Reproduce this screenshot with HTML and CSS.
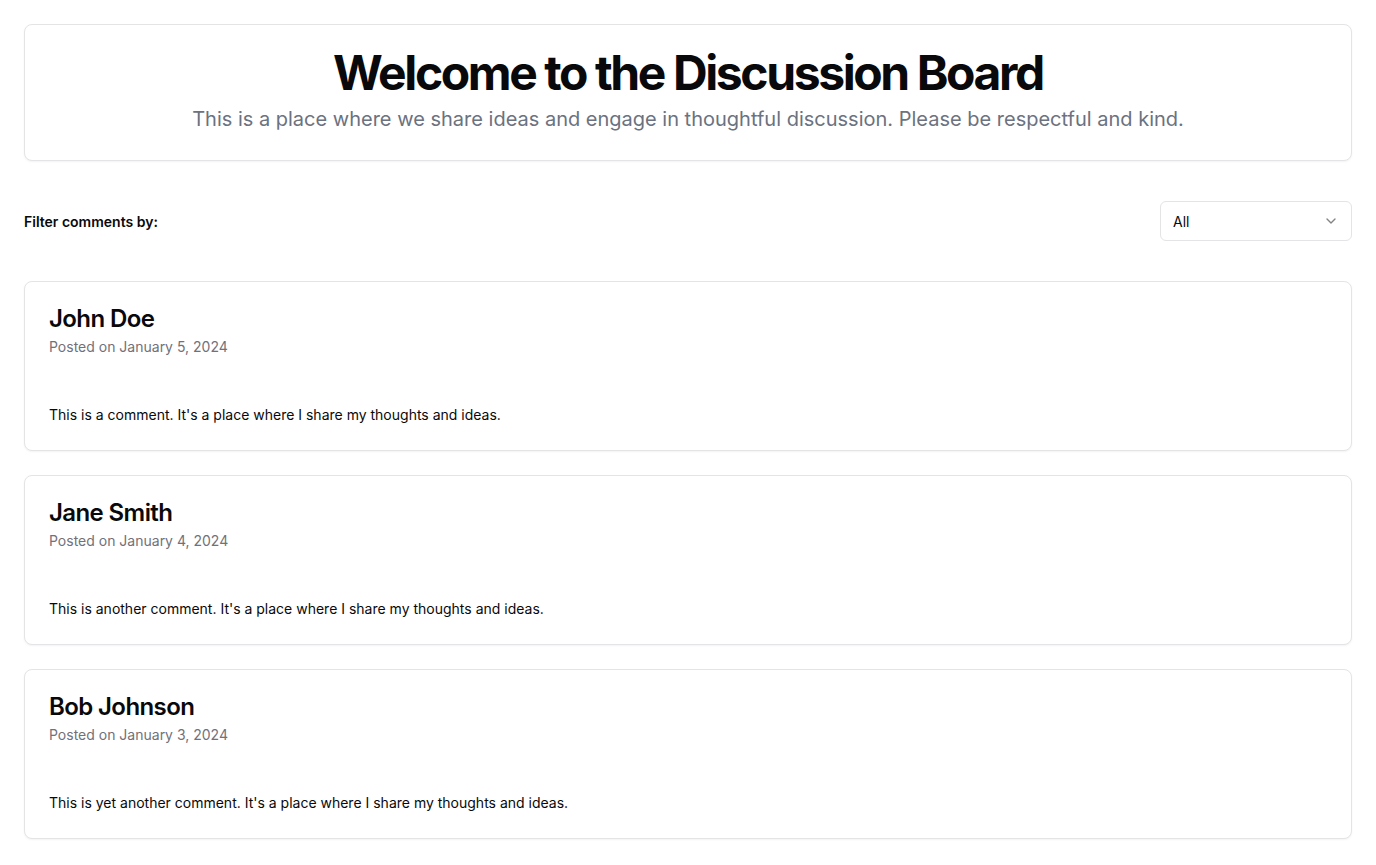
FILE: index.html
```html
<!DOCTYPE html>
<html lang="en">
<head>
<meta charset="utf-8">
<title>Discussion Board</title>
<link rel="stylesheet" href="styles.css">
</head>
<body>
<main class="page">
  <section class="card hero">
    <h1 class="hero-title">Welcome to the Discussion Board</h1>
    <p class="hero-sub">This is a place where we share ideas and engage in thoughtful discussion. Please be respectful and kind.</p>
  </section>

  <div class="filter-row">
    <label class="filter-label">Filter comments by:</label>
    <button class="select" type="button">
      <span>All</span>
      <svg class="chev" width="16" height="16" viewBox="0 0 24 24" fill="none" stroke="currentColor" stroke-width="2" stroke-linecap="round" stroke-linejoin="round"><path d="m6 9 6 6 6-6"/></svg>
    </button>
  </div>

  <div class="comments">
    <article class="card comment">
      <header class="c-head">
        <h3 class="c-name">John Doe</h3>
        <p class="c-date">Posted on January 5, 2024</p>
      </header>
      <div class="c-body">This is a comment. It's a place where I share my thoughts and ideas.</div>
    </article>
    <article class="card comment">
      <header class="c-head">
        <h3 class="c-name">Jane Smith</h3>
        <p class="c-date">Posted on January 4, 2024</p>
      </header>
      <div class="c-body">This is another comment. It's a place where I share my thoughts and ideas.</div>
    </article>
    <article class="card comment">
      <header class="c-head">
        <h3 class="c-name">Bob Johnson</h3>
        <p class="c-date">Posted on January 3, 2024</p>
      </header>
      <div class="c-body">This is yet another comment. It's a place where I share my thoughts and ideas.</div>
    </article>
  </div>
</main>
</body>
</html>
```

FILE: styles.css
```css
* { box-sizing: border-box; }
html, body { margin: 0; padding: 0; background: #fff; }
body {
  font-family: Inter, "Noto Sans", "Liberation Sans", sans-serif;
  color: #09090b;
}
h1, h3, p { margin: 0; }

.page {
  padding: 24px;
  display: flex;
  flex-direction: column;
}

.card {
  border: 1px solid #e4e4e7;
  border-radius: 8px;
  background: #fff;
  box-shadow: 0 1px 2px rgba(0,0,0,0.05);
}

.hero {
  padding: 24px 24px 27px;
  text-align: center;
}
.hero-title {
  font-size: 48px;
  line-height: 48px;
  font-weight: 700;
  letter-spacing: -0.05em;
}
.hero-sub {
  margin-top: 8px;
  font-size: 20px;
  line-height: 28px;
  color: #6b7280;
}

.filter-row {
  margin: 40px 0;
  display: flex;
  justify-content: space-between;
  align-items: center;
}
.filter-label {
  font-size: 14px;
  font-weight: 600;
}
.select {
  width: 192px;
  height: 40px;
  padding: 0 12px;
  border: 1px solid #e4e4e7;
  border-radius: 6px;
  background: #fff;
  display: flex;
  align-items: center;
  justify-content: space-between;
  font-family: inherit;
  font-size: 14px;
  color: #09090b;
}
.chev { opacity: 0.5; }

.comments {
  display: flex;
  flex-direction: column;
  gap: 24px;
}
.c-head {
  padding: 25px 24px 24px;
  display: flex;
  flex-direction: column;
  gap: 6px;
}
.c-name {
  font-size: 24px;
  line-height: 24px;
  font-weight: 600;
  letter-spacing: -0.025em;
}
.c-date {
  font-size: 14px;
  line-height: 20px;
  color: #71717a;
}
.c-body {
  padding: 24px 24px 25px;
  font-size: 14px;
  line-height: 20px;
}
```
